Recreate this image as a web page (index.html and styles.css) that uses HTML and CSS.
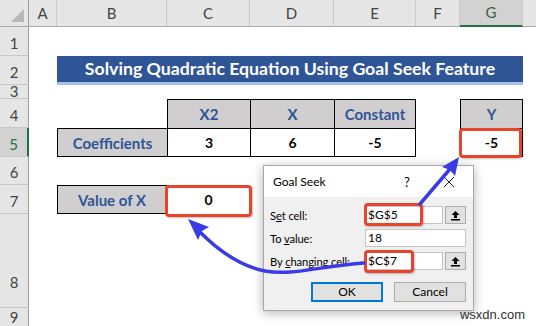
FILE: index.html
```html
<!DOCTYPE html>
<html lang="en">
<head>
  <meta charset="UTF-8" />
  <title>Goal Seek - Quadratic Equation</title>
  <link rel="stylesheet" href="styles.css">
</head>
<body>
  <div class="page">
    <div class="sheet">
      <div class="row head">
        <div class="corner"><span class="tri"></span></div>
        <div class="ch">A</div>
        <div class="ch">B</div>
        <div class="ch">C</div>
        <div class="ch">D</div>
        <div class="ch">E</div>
        <div class="ch">F</div>
        <div class="ch sel">G</div>
        <div class="ch last"></div>
      </div>

      <div class="row r-std">
        <div class="rh">1</div>
      </div>

      <div class="row r-std">
        <div class="rh">2</div>
        <div></div>
        <div class="title">Solving Quadratic Equation Using Goal Seek Feature</div>
      </div>

      <div class="row r-thin">
        <div class="rh">3</div>
      </div>

      <div class="row r-std">
        <div class="rh">4</div>
        <div></div>
        <div></div>
        <div class="cell hd bt bl">X2</div>
        <div class="cell hd bt bl">X</div>
        <div class="cell hd bt bl br">Constant</div>
        <div></div>
        <div class="cell hd bt bl br">Y</div>
      </div>

      <div class="row r-std">
        <div class="rh active">5</div>
        <div></div>
        <div class="cell hd bt bl bb">Coefficients</div>
        <div class="cell val bt bl bb">3</div>
        <div class="cell val bt bl bb">6</div>
        <div class="cell val bt bl bb br">-5</div>
        <div></div>
        <div class="cell val bt bl bb br">-5<span class="mark mark-g5"></span></div>
      </div>

      <div class="row r-six">
        <div class="rh">6</div>
      </div>

      <div class="row r-std">
        <div class="rh">7</div>
        <div></div>
        <div class="cell hd bt bl bb br">Value of X</div>
        <div class="cell val">0<span class="mark mark-c7"></span></div>
      </div>

      <div class="row r-tall">
        <div class="rh">8</div>
      </div>

      <div class="row r-end">
        <div class="rh-end">9</div>
      </div>
    </div>

    <div class="dlg">
      <div class="dlg-top">
        <span class="dlg-title">Goal Seek</span>
        <span class="dlg-help">?</span>
        <svg class="dlg-close" width="12" height="12" viewBox="0 0 12 12">
          <path d="M1 1 L11 11 M11 1 L1 11" stroke="#222" stroke-width="1" fill="none"/>
        </svg>
      </div>
      <div class="dlg-body">
        <div class="field">
          <span class="lbl">S<u>e</u>t cell:</span>
          <div class="inp-wrap">
            <div class="inp">$G$5<span class="mark mark-set"></span></div>
            <div class="ref">
              <svg width="11" height="11" viewBox="0 0 11 11">
                <path d="M5.5 1 L1.5 5 H4 V8 H7 V5 H9.5 Z" fill="#000"/>
                <rect x="1" y="9" width="9" height="1.5" fill="#000"/>
              </svg>
            </div>
          </div>
        </div>
        <div class="field">
          <span class="lbl">To <u>v</u>alue:</span>
          <div class="inp-wrap">
            <div class="inp full">18</div>
          </div>
        </div>
        <div class="field">
          <span class="lbl">By <u>c</u>hanging cell:</span>
          <div class="inp-wrap">
            <div class="inp">$C$7<span class="mark mark-chg"></span></div>
            <div class="ref">
              <svg width="11" height="11" viewBox="0 0 11 11">
                <path d="M5.5 1 L1.5 5 H4 V8 H7 V5 H9.5 Z" fill="#000"/>
                <rect x="1" y="9" width="9" height="1.5" fill="#000"/>
              </svg>
            </div>
          </div>
        </div>
        <div class="btns">
          <div class="btn primary">OK</div>
          <div class="btn">Cancel</div>
        </div>
      </div>
    </div>

    <svg class="arrows" width="536" height="326" viewBox="0 0 536 326">
      <path d="M364 263 C 320 266, 292 276, 265 271 C 240 266, 220 252, 201 233" stroke="#3b3be6" stroke-width="3.5" fill="none" stroke-linecap="round"/>
      <path d="M188 219 L209 227 L202 231 L198 240 Z" fill="#3b3be6"/>
      <path d="M420 204 L450 169" stroke="#3b3be6" stroke-width="3.5" fill="none" stroke-linecap="round"/>
      <path d="M459 157 L455 176 L450 170 L442 167 Z" fill="#3b3be6"/>
    </svg>

    <div class="watermark">wsxdn.com</div>
  </div>
</body>
</html>
```

FILE: styles.css
```css
body {
  margin: 0;
  background: #fff;
  font-family: 'Lato', 'Liberation Sans', sans-serif;
}

.page {
  position: relative;
  width: 536px;
  height: 326px;
  overflow: hidden;
}

.row {
  display: grid;
  grid-template-columns: 29px 28px 110px 83px 84px 82px 44px 63px 13px;
}

.head { height: 27px; }
.r-std { height: 29px; }
.r-thin { height: 14px; }
.r-six { height: 28px; }
.r-tall { height: 94px; }
.r-end { height: 18px; }

.corner {
  position: relative;
  background: #e6e6e6;
  border-right: 1px solid #9e9e9e;
  border-bottom: 1px solid #ababab;
}

.tri {
  position: absolute;
  right: 4px;
  bottom: 4px;
  width: 0;
  height: 0;
  border-left: 13px solid transparent;
  border-bottom: 13px solid #b8b8b8;
}

.ch {
  background: #e6e6e6;
  border-right: 1px solid #c8c8c8;
  border-bottom: 1px solid #ababab;
  color: #444;
  font-size: 15px;
  line-height: 26px;
  text-align: center;
}

.ch.sel {
  background: #d2d2d2;
  border-bottom: 2px solid #217346;
  line-height: 25px;
  color: #3d5c48;
}

.ch.last { border-right: none; }

.rh {
  background: #e6e6e6;
  border-right: 1px solid #9e9e9e;
  border-bottom: 1px solid #c8c8c8;
  color: #444;
  font-size: 15px;
  line-height: 17px;
  display: flex;
  align-items: flex-end;
  justify-content: center;
  padding-bottom: 3px;
  overflow: hidden;
  box-sizing: border-box;
}

.r-thin .rh { line-height: 14px; padding-bottom: 0; }
.r-tall .rh { padding-bottom: 16px; }

.rh-end {
  background: #e6e6e6;
  border-right: 1px solid #9e9e9e;
  color: #444;
  font-size: 15px;
  line-height: 18px;
  text-align: center;
}

.rh.active {
  background: #d2d2d2;
  border-right: 2px solid #217346;
  color: #2e6b46;
}

.title {
  grid-column: 3 / 9;
  background: #2f5597;
  border-bottom: 3px solid #a4c2e8;
  color: #fff;
  font-weight: 700;
  font-size: 17.7px;
  line-height: 26px;
  text-align: center;
}

.cell {
  position: relative;
  box-sizing: border-box;
  display: flex;
  align-items: center;
  justify-content: center;
  font-weight: 700;
}

.bt { border-top: 1px solid #000; }
.bl { border-left: 1px solid #000; }
.br { border-right: 1px solid #000; }
.bb { border-bottom: 1px solid #000; }

.hd {
  background: #d0cece;
  color: #2f5597;
  font-size: 15px;
}

.val {
  background: #fff;
  color: #000;
  font-size: 14px;
}

.mark {
  position: absolute;
  box-sizing: border-box;
  border: 3px solid #e8432b;
  border-radius: 4px;
  box-shadow: 1px 1px 2px rgba(0,0,0,0.25);
}

.mark-g5 { left: -2px; top: -1px; right: 0; bottom: -2px; }
.mark-c7 { left: -2px; top: 0; right: -2px; bottom: -3px; }

.dlg {
  position: absolute;
  left: 263px;
  top: 165px;
  width: 211px;
  height: 146px;
  box-sizing: border-box;
  background: #f0f0f0;
  border: 1px solid #a8a8a8;
  box-shadow: 0 2px 10px rgba(0,0,0,0.3);
  font-family: 'Lato', 'Liberation Sans', sans-serif;
  font-size: 12px;
  color: #000;
}

.dlg-top {
  height: 31px;
  background: #fff;
  display: flex;
  align-items: center;
  padding: 0 0 0 9px;
}

.dlg-title { flex: 1; }

.dlg-help {
  width: 12px;
  margin-right: 27px;
  font-size: 13px;
}

.dlg-close { margin-right: 18px; }

.dlg-body {
  padding: 9px 7px 0 6px;
  display: flex;
  flex-direction: column;
  gap: 5px;
}

.field {
  display: grid;
  grid-template-columns: 95px 1fr;
  align-items: center;
  height: 18px;
}

.lbl {
  font-size: 11.2px;
  letter-spacing: -0.1px;
  white-space: nowrap;
}

.inp-wrap {
  display: flex;
  gap: 2px;
  height: 18px;
}

.inp {
  position: relative;
  flex: 1;
  background: #fff;
  border: 1px solid #c4c4c4;
  line-height: 16px;
  padding-left: 2px;
}

.ref {
  width: 19px;
  background: #e1e1e1;
  border: 1px solid #adadad;
  display: flex;
  align-items: center;
  justify-content: center;
}

.mark-set { left: -2px; top: -4px; width: 59px; bottom: -3px; }
.mark-chg { left: -2px; top: -3px; width: 50px; bottom: -4px; }

.btns {
  display: flex;
  justify-content: flex-end;
  gap: 11px;
  margin-top: 7px;
}

.btn {
  width: 72px;
  height: 20px;
  box-sizing: border-box;
  background: #e1e1e1;
  border: 1px solid #adadad;
  text-align: center;
  line-height: 18px;
}

.btn.primary { border: 2px solid #0078d7; line-height: 16px; }

.arrows {
  position: absolute;
  left: 0;
  top: 0;
  pointer-events: none;
}

.watermark {
  position: absolute;
  right: 11px;
  bottom: 4px;
  font-family: 'Liberation Sans', sans-serif;
  font-size: 13px;
  color: #333;
}
```
